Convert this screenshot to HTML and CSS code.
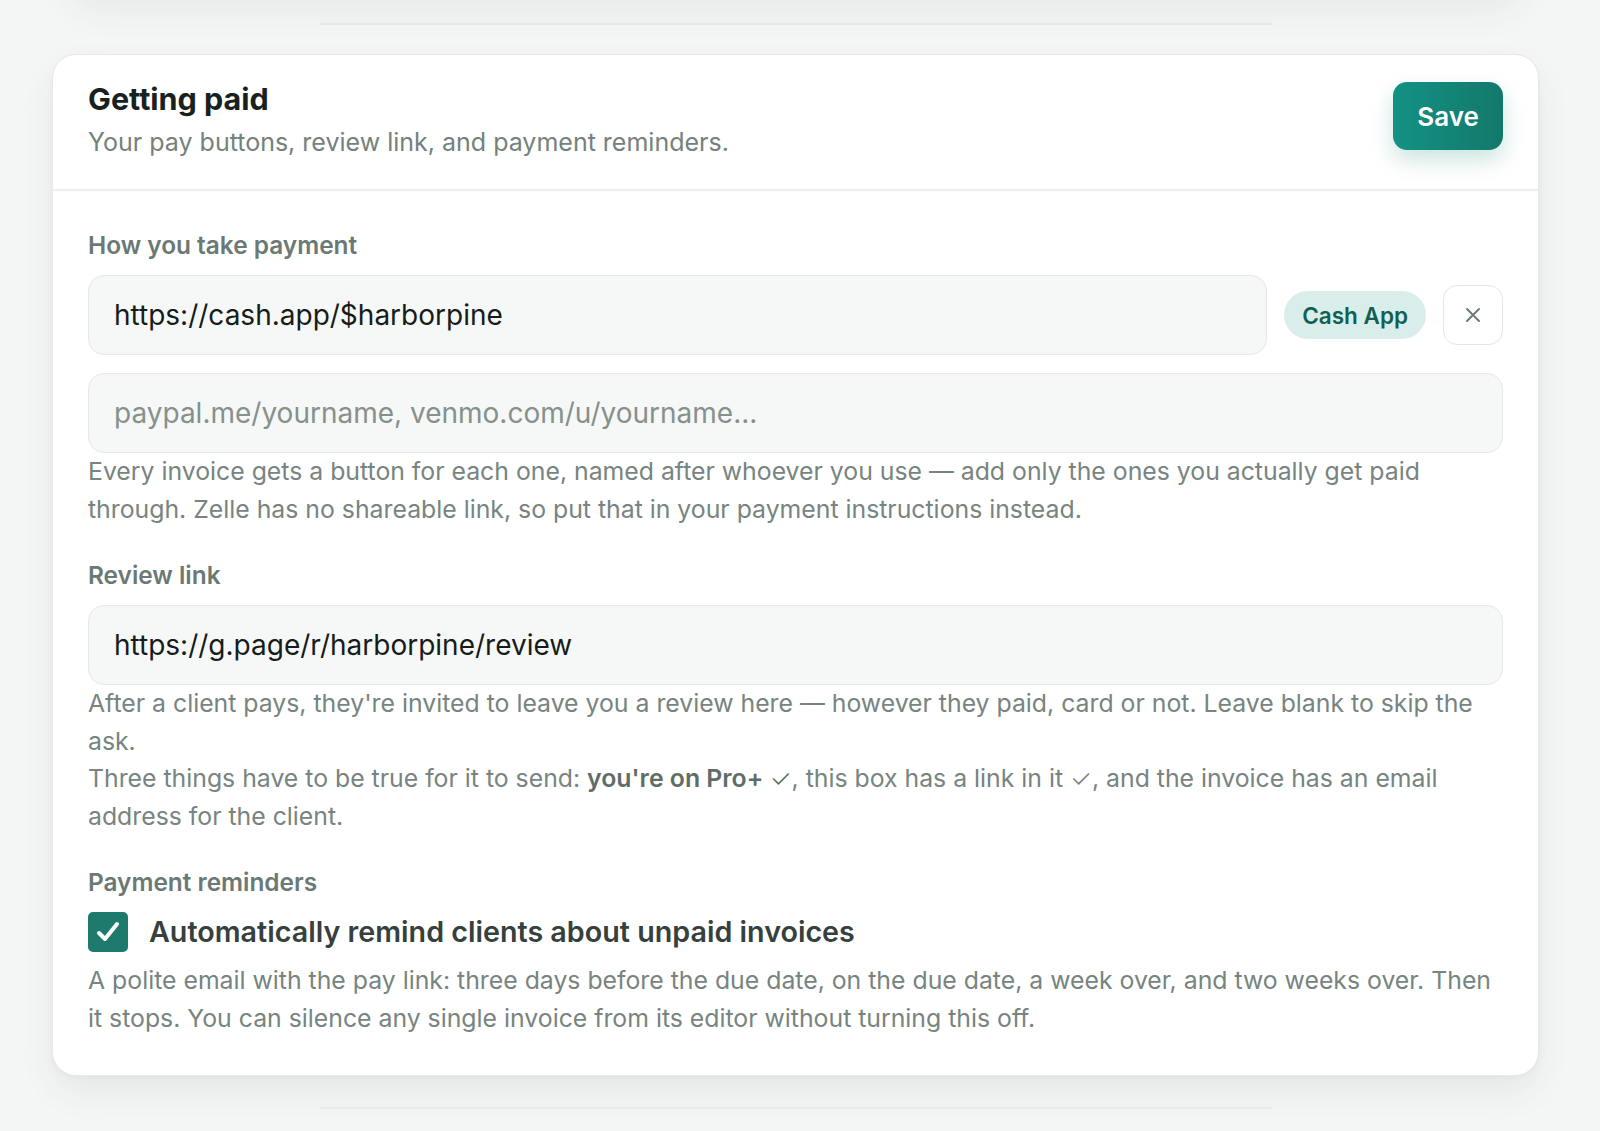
FILE: index.html
```html
<!DOCTYPE html>
<html lang="en">
<head>
<meta charset="utf-8">
<title>Getting paid</title>
<link rel="stylesheet" href="styles.css">
</head>
<body>
<div class="page">
  <div class="prev-card"></div>
  <hr class="sep sep-top">
  <section class="card">
    <header class="card-head">
      <div class="head-text">
        <h2 class="title">Getting paid</h2>
        <p class="subtitle">Your pay buttons, review link, and payment reminders.</p>
      </div>
      <button class="btn-save" type="button">Save</button>
    </header>
    <div class="card-body">
      <div class="field">
        <div class="label">How you take payment</div>
        <div class="pay-row">
          <div class="input filled">https://cash.app/$harborpine</div>
          <span class="pill">Cash App</span>
          <button class="btn-close" type="button" aria-label="Remove">
            <svg width="16" height="16" viewBox="0 0 16 16" fill="none" stroke="#6f7b77" stroke-width="2" stroke-linecap="round"><path d="M2 2 L14 14 M14 2 L2 14"/></svg>
          </button>
        </div>
        <div class="input placeholder second">paypal.me/yourname, venmo.com/u/yourname...</div>
        <p class="help">Every invoice gets a button for each one, named after whoever you use — add only the ones you actually get paid through. Zelle has no shareable link, so put that in your payment instructions instead.</p>
      </div>
      <div class="field">
        <div class="label">Review link</div>
        <div class="input filled">https://g.page/r/harborpine/review</div>
        <p class="help">After a client pays, they're invited to leave you a review here — however they paid, card or not. Leave blank to skip the ask.</p>
        <p class="help">Three things have to be true for it to send: <strong>you're on Pro+ <span class="chk">✓</span></strong>, this box has a link in it <span class="chk">✓</span>, and the invoice has an email address for the client.</p>
      </div>
      <div class="field">
        <div class="label">Payment reminders</div>
        <div class="check-row">
          <span class="checkbox">
            <svg width="26" height="26" viewBox="0 0 26 26" fill="none" stroke="#fff" stroke-width="4" stroke-linecap="round" stroke-linejoin="round"><path d="M4 14 L10 20 L22 5"/></svg>
          </span>
          <span class="check-label">Automatically remind clients about unpaid invoices</span>
        </div>
        <p class="help tight">A polite email with the pay link: three days before the due date, on the due date, a week over, and two weeks over. Then it stops. You can silence any single invoice from its editor without turning this off.</p>
      </div>
    </div>
  </section>
  <hr class="sep sep-bottom">
</div>
</body>
</html>
```

FILE: styles.css
```css
* { box-sizing: border-box; }
html, body { margin: 0; padding: 0; }
body {
  background: #f4f6f5;
  font-family: Inter, "Noto Sans", "DejaVu Sans", sans-serif;
  height: 1131px;
  overflow: hidden;
}
.page {
  width: 1591px;
  padding-top: 1px;
}
.prev-card {
  height: 60px;
  margin: -70px 70px 0;
  background: #fff;
  border-radius: 24px;
  box-shadow: 0 18px 36px rgba(30, 50, 45, 0.07);
}
.sep {
  border: 0;
  height: 2px;
  background: #e5e9e7;
  width: 952px;
  margin: 0 auto;
}
.sep-top { margin-top: 32px; margin-bottom: 29px; }
.sep-bottom { margin-top: 31px; }
.card {
  margin: 0 52px;
  background: #fff;
  border: 1px solid #e5e9e7;
  border-radius: 24px;
  box-shadow: 0 16px 34px rgba(30, 50, 45, 0.07), 0 2px 4px rgba(30, 50, 45, 0.03);
}
.card-head {
  display: flex;
  justify-content: space-between;
  align-items: flex-start;
  padding: 26px 35px 29px 35px;
  border-bottom: 2px solid #eceff0;
}
.title {
  margin: 0 0 7px;
  font-size: 30.5px;
  line-height: 36px;
  font-weight: 700;
  color: #18211e;
}
.subtitle {
  margin: 0;
  font-size: 25px;
  line-height: 36px;
  color: #74817c;
}
.btn-save {
  margin-top: 1px;
  width: 110px;
  height: 68px;
  border: 0;
  border-radius: 14px;
  background: linear-gradient(90deg, #139283 0%, #13786c 100%);
  color: #fff;
  font-family: inherit;
  font-size: 26px;
  font-weight: 600;
  box-shadow: 0 10px 22px rgba(19, 130, 115, 0.22);
}
.card-body {
  padding: 38px 35px 38px;
  display: flex;
  flex-direction: column;
  gap: 31px;
}
.label {
  font-size: 24.4px;
  line-height: 33px;
  font-weight: 600;
  color: #6b7975;
  margin-bottom: 13px;
}
.pay-row {
  display: flex;
  align-items: center;
  gap: 17px;
}
.pay-row .input { flex: 1; }
.input {
  height: 80px;
  display: flex;
  align-items: center;
  padding: 0 25px;
  background: #f6f8f7;
  border: 1px solid #e4e8e6;
  border-radius: 16px;
  font-size: 28px;
  color: #161c1a;
}
.input.second { margin-top: 18px; }
.input.placeholder { color: #86918d; }
.pill {
  height: 48px;
  display: flex;
  align-items: center;
  padding: 0 18px;
  border-radius: 24px;
  background: #d9eeea;
  color: #145e52;
  font-size: 22.5px;
  font-weight: 600;
}
.btn-close {
  width: 60px;
  height: 60px;
  display: flex;
  align-items: center;
  justify-content: center;
  background: #fff;
  border: 1px solid #e3e7e5;
  border-radius: 14px;
  padding: 0;
}
.help {
  margin: 0;
  font-size: 24.8px;
  line-height: 37.5px;
  color: #77847f;
}
.help.tight { margin-top: 10px; }
.help strong {
  font-weight: 600;
  color: #5f6d68;
}
.chk {
  font-weight: 300;
}
.check-row {
  display: flex;
  align-items: center;
  gap: 21px;
}
.checkbox {
  width: 40px;
  height: 40px;
  border-radius: 5px;
  background: #1d7a6d;
  display: flex;
  align-items: center;
  justify-content: center;
  flex: none;
}
.check-label {
  font-size: 28.7px;
  font-weight: 600;
  color: #36403d;
  line-height: 40px;
}
```
